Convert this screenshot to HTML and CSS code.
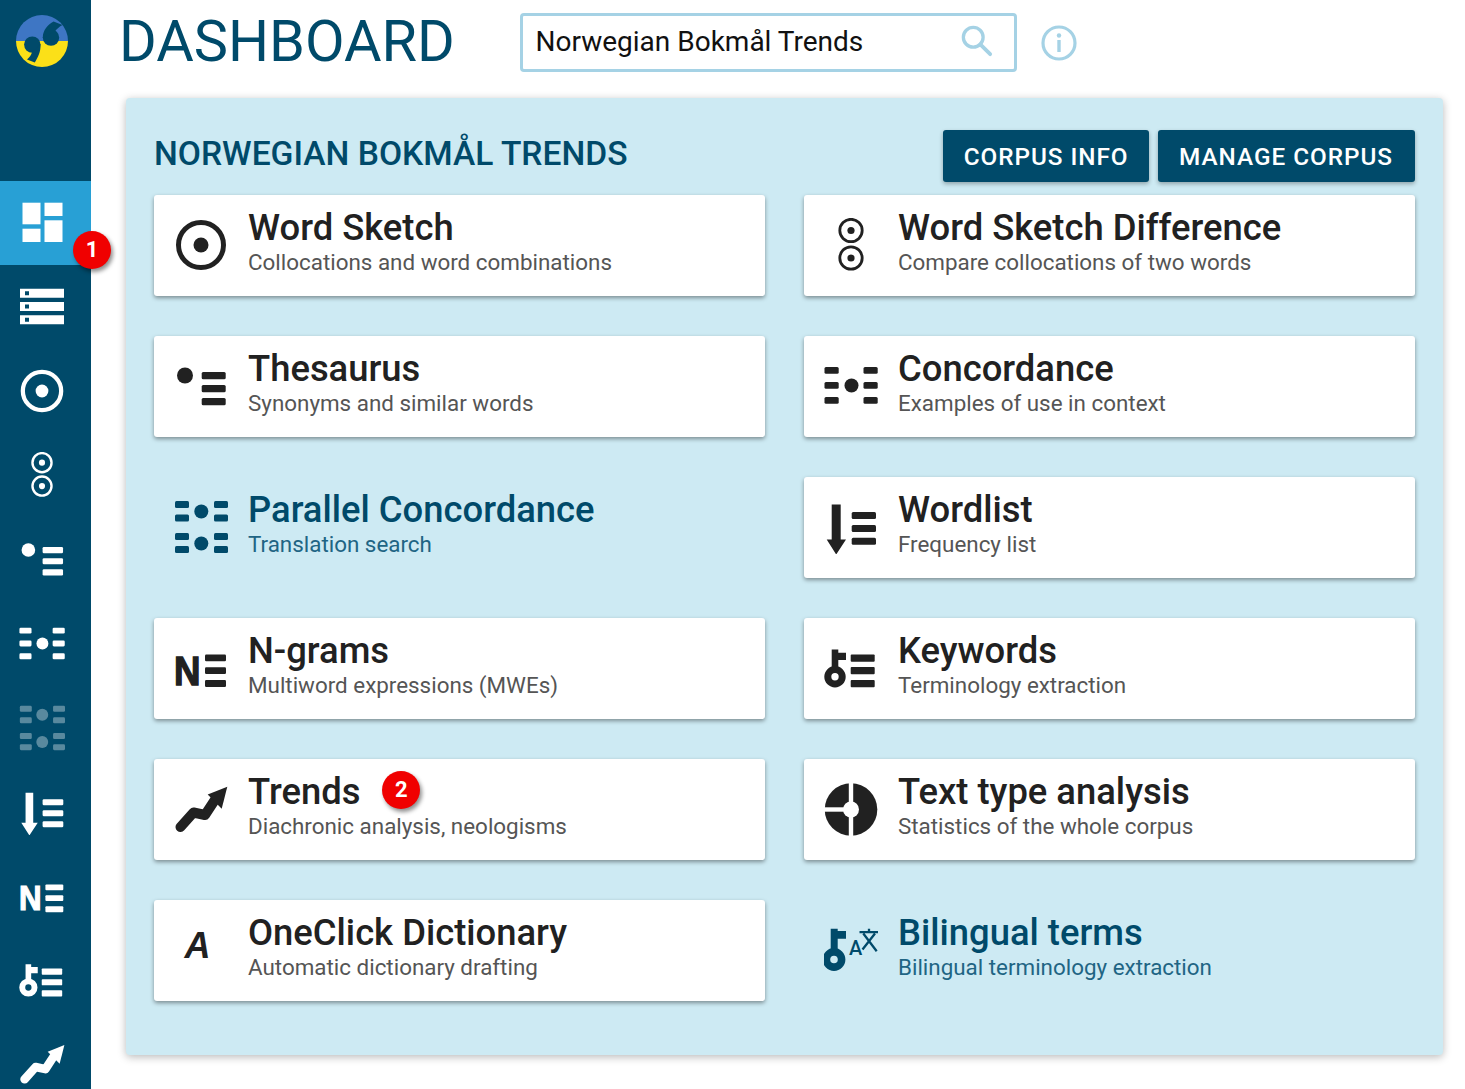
FILE: index.html
```html
<!DOCTYPE html>
<html lang="en">
<head>
<meta charset="utf-8">
<title>Dashboard</title>
<link rel="stylesheet" href="styles.css">
</head>
<body>
<svg class="defs" aria-hidden="true">
  <symbol id="i-ws" viewBox="0 0 54 54"><circle cx="27" cy="27" r="22.5" fill="none" stroke="currentColor" stroke-width="5"/><circle cx="27" cy="27" r="7.5" fill="currentColor"/></symbol>
  <symbol id="i-wsd" viewBox="0 0 54 54"><g fill="none" stroke="currentColor" stroke-width="2.8"><circle cx="27" cy="12.5" r="11.2"/><circle cx="27" cy="40" r="11.2"/></g><g fill="currentColor"><circle cx="27" cy="12.5" r="3.6"/><circle cx="27" cy="40" r="3.6"/></g></symbol>
  <symbol id="i-the" viewBox="0 0 54 54"><g fill="currentColor"><circle cx="11" cy="16.5" r="8"/><rect x="27.7" y="13" width="24" height="7.3" rx="1.5"/><rect x="27.7" y="26" width="24" height="7.3" rx="1.5"/><rect x="27.7" y="39" width="24" height="7.3" rx="1.5"/></g></symbol>
  <symbol id="i-con" viewBox="0 0 54 54"><g fill="currentColor"><circle cx="27.5" cy="26.5" r="7"/><rect x=".5" y="8" width="14.2" height="6.8" rx="1.5"/><rect x=".5" y="23" width="14.2" height="6.8" rx="1.5"/><rect x=".5" y="38" width="14.2" height="6.8" rx="1.5"/><rect x="39.5" y="8" width="14.2" height="6.8" rx="1.5"/><rect x="39.5" y="23" width="14.2" height="6.8" rx="1.5"/><rect x="39.5" y="38" width="14.2" height="6.8" rx="1.5"/></g></symbol>
  <symbol id="i-par" viewBox="0 0 54 54"><g fill="currentColor"><circle cx="27.3" cy="11.5" r="7"/><circle cx="27.3" cy="43.5" r="7"/><rect x="1" y="1" width="14" height="7" rx="1.5"/><rect x="1" y="14.5" width="14" height="7" rx="1.5"/><rect x="1" y="33" width="14" height="7" rx="1.5"/><rect x="1" y="46" width="14" height="7" rx="1.5"/><rect x="40" y="1" width="14" height="7" rx="1.5"/><rect x="40" y="14.5" width="14" height="7" rx="1.5"/><rect x="40" y="33" width="14" height="7" rx="1.5"/><rect x="40" y="46" width="14" height="7" rx="1.5"/></g></symbol>
  <symbol id="i-wl" viewBox="0 0 54 54"><g fill="currentColor"><path d="M7.7 4.5h9v35H22L12.2 54.5 2.7 39.5h5z"/><rect x="27.7" y="12" width="24.3" height="7" rx="1.5"/><rect x="27.7" y="25" width="24.3" height="7" rx="1.5"/><rect x="27.7" y="37.8" width="24.3" height="7" rx="1.5"/></g></symbol>
  <symbol id="i-ng" viewBox="0 0 54 54"><g fill="currentColor"><text class="icon-letter icon-letter--heavy" x="0" y="43.8" font-size="41" textLength="26.5" lengthAdjust="spacingAndGlyphs">N</text><rect x="31" y="13.5" width="21" height="6.8" rx="1.2"/><rect x="31" y="26.2" width="21" height="6.8" rx="1.2"/><rect x="31" y="39" width="21" height="7" rx="1.2"/></g></symbol>
  <symbol id="i-kw" viewBox="0 0 54 54"><circle cx="11" cy="35.8" r="7.2" fill="none" stroke="currentColor" stroke-width="7"/><g fill="currentColor"><path d="M7.7 8.5h6.6v3.3H22V19h-7.7v12H7.7z"/><rect x="26.7" y="13.5" width="24" height="7.3" rx="1"/><rect x="26.7" y="26" width="24" height="7.3" rx="1"/><rect x="26.7" y="39" width="24" height="7.3" rx="1"/></g></symbol>
  <symbol id="i-tr" viewBox="0 0 54 54"><path d="M6.5 45 19.5 30.5 31 33 40.5 18.5" fill="none" stroke="currentColor" stroke-width="10" stroke-linecap="round" stroke-linejoin="round"/><path d="M53.3 4.800 33.7 12.500 47.7 26.800z" fill="currentColor"/></symbol>
  <symbol id="i-tt" viewBox="0 0 54 54"><circle cx="27" cy="27.5" r="26.3" fill="currentColor"/><g fill="#fff"><rect x="24.8" y="0" width="4.4" height="55"/><rect x="0" y="25.3" width="27" height="4.4"/><circle cx="27" cy="27.5" r="8"/></g></symbol>
  <symbol id="i-oc" viewBox="0 0 54 54"><text class="icon-letter icon-letter--italic" x="10.5" y="34.8" font-size="36" fill="currentColor">A</text></symbol>
  <symbol id="i-bt" viewBox="0 0 54 54"><circle cx="10" cy="36.5" r="7.6" fill="none" stroke="currentColor" stroke-width="7.6"/><path d="M6.7 5.800h7v2.200H22v7.800h-8.300V30H6.700z" fill="currentColor"/><text class="icon-small" x="25" y="32" font-size="20" fill="currentColor">A</text><path d="M35.500 9.200h19.800M45 5.800v3.400M51 10.500 38.500 26.500M39.300 10.500 52.700 28.200" fill="none" stroke="currentColor" stroke-width="2.300"/></symbol>
  <symbol id="i-dash" viewBox="0 0 46 46"><g fill="currentColor"><rect x="3.5" y="2.7" width="18" height="21.6"/><rect x="25.5" y="2.7" width="18" height="13.3"/><rect x="3.5" y="28.7" width="18" height="13.3"/><rect x="25.5" y="20.3" width="18" height="21.7"/></g></symbol>
  <symbol id="i-corp" viewBox="0 0 46 46"><path fill="currentColor" fill-rule="evenodd" d="M1 4.700h44v9H1zM6 7.200v4h4v-4zM1 18h44v9H1zM6 20.500v4h4v-4zM1 31.300h44v9H1zM6 33.800v4h4v-4z"/></symbol>
</svg>

<div class="app">
  <nav class="sidebar">
    <div class="logo-wrap">
      <svg class="logo" viewBox="0 0 54 54">
        <path d="M1 27a26 26 0 0 1 52 0z" fill="#3e76c4"/>
        <path d="M1 27a26 26 0 0 0 52 0z" fill="#fbe018"/>
        <g fill="#004a6a">
          <circle cx="17.3" cy="30.6" r="8.2"/>
          <path d="M25.500 30c.5 8-3 14-5.700 18.500L12 45.600c2.500-2.600 4.500-4.600 5-7.600z"/>
          <circle cx="36" cy="23.600" r="8.200"/>
          <path d="M27.800 24c0-8 5-13.500 10.800-16.500L47.500 11c-3 1.700-6 4-7.200 6z"/>
        </g>
      </svg>
    </div>
    <a class="nav-item nav-item--active"><svg class="nav-icon"><use href="#i-dash"/></svg><span class="badge badge--side">1</span></a>
    <a class="nav-item"><svg class="nav-icon"><use href="#i-corp"/></svg></a>
    <a class="nav-item"><svg class="nav-icon"><use href="#i-ws"/></svg></a>
    <a class="nav-item"><svg class="nav-icon"><use href="#i-wsd"/></svg></a>
    <a class="nav-item"><svg class="nav-icon"><use href="#i-the"/></svg></a>
    <a class="nav-item"><svg class="nav-icon"><use href="#i-con"/></svg></a>
    <a class="nav-item nav-item--off"><svg class="nav-icon"><use href="#i-par"/></svg></a>
    <a class="nav-item"><svg class="nav-icon"><use href="#i-wl"/></svg></a>
    <a class="nav-item"><svg class="nav-icon"><use href="#i-ng"/></svg></a>
    <a class="nav-item"><svg class="nav-icon"><use href="#i-kw"/></svg></a>
    <a class="nav-item"><svg class="nav-icon"><use href="#i-tr"/></svg></a>
  </nav>

  <main class="main">
    <header class="topbar">
      <h1 class="page-title">DASHBOARD</h1>
      <div class="search">
        <span class="search-text">Norwegian Bokmål Trends</span>
        <svg class="search-icon" viewBox="0 0 34 34"><circle cx="13" cy="13" r="10.5" fill="none" stroke="currentColor" stroke-width="3.5"/><path d="M20.500 20.500 31 31" stroke="currentColor" stroke-width="4" stroke-linecap="round"/></svg>
      </div>
      <svg class="info-icon" viewBox="0 0 36 36"><circle cx="18" cy="18" r="16" fill="none" stroke="currentColor" stroke-width="3.2"/><circle cx="18" cy="10.5" r="2.2" fill="currentColor"/><rect x="16.3" y="15" width="3.4" height="12" fill="currentColor"/></svg>
    </header>

    <section class="panel">
      <div class="panel-head">
        <h2 class="panel-title">NORWEGIAN BOKMÅL TRENDS</h2>
        <div class="actions">
          <a class="btn">CORPUS INFO</a>
          <a class="btn btn--wide">MANAGE CORPUS</a>
        </div>
      </div>
      <div class="cards">
        <a class="card"><svg class="card-icon"><use href="#i-ws"/></svg><div class="card-text"><div class="card-title">Word Sketch</div><div class="card-sub">Collocations and word combinations</div></div></a>
        <a class="card"><svg class="card-icon"><use href="#i-wsd"/></svg><div class="card-text"><div class="card-title">Word Sketch Difference</div><div class="card-sub">Compare collocations of two words</div></div></a>
        <a class="card"><svg class="card-icon"><use href="#i-the"/></svg><div class="card-text"><div class="card-title">Thesaurus</div><div class="card-sub">Synonyms and similar words</div></div></a>
        <a class="card"><svg class="card-icon"><use href="#i-con"/></svg><div class="card-text"><div class="card-title">Concordance</div><div class="card-sub">Examples of use in context</div></div></a>
        <a class="card card--plain"><svg class="card-icon"><use href="#i-par"/></svg><div class="card-text"><div class="card-title">Parallel Concordance</div><div class="card-sub">Translation search</div></div></a>
        <a class="card"><svg class="card-icon"><use href="#i-wl"/></svg><div class="card-text"><div class="card-title">Wordlist</div><div class="card-sub">Frequency list</div></div></a>
        <a class="card"><svg class="card-icon"><use href="#i-ng"/></svg><div class="card-text"><div class="card-title">N-grams</div><div class="card-sub">Multiword expressions (MWEs)</div></div></a>
        <a class="card"><svg class="card-icon"><use href="#i-kw"/></svg><div class="card-text"><div class="card-title">Keywords</div><div class="card-sub">Terminology extraction</div></div></a>
        <a class="card"><svg class="card-icon"><use href="#i-tr"/></svg><div class="card-text"><div class="card-title">Trends<span class="badge badge--inline">2</span></div><div class="card-sub">Diachronic analysis, neologisms</div></div></a>
        <a class="card"><svg class="card-icon"><use href="#i-tt"/></svg><div class="card-text"><div class="card-title">Text type analysis</div><div class="card-sub">Statistics of the whole corpus</div></div></a>
        <a class="card"><svg class="card-icon"><use href="#i-oc"/></svg><div class="card-text"><div class="card-title">OneClick Dictionary</div><div class="card-sub">Automatic dictionary drafting</div></div></a>
        <a class="card card--plain"><svg class="card-icon"><use href="#i-bt"/></svg><div class="card-text"><div class="card-title">Bilingual terms</div><div class="card-sub">Bilingual terminology extraction</div></div></a>
      </div>
    </section>
  </main>
</div>
</body>
</html>
```

FILE: styles.css
```css
* { box-sizing: border-box; }

html, body {
  margin: 0;
  height: 100%;
  overflow: hidden;
  background: #fff;
  font-family: Roboto, "Liberation Sans", sans-serif;
}

.defs { display: none; }

.app { display: flex; height: 1089px; }

.sidebar {
  flex: 0 0 91px;
  display: flex;
  flex-direction: column;
  background: #004a6a;
  color: #fff;
}

.logo-wrap {
  flex: 0 0 181px;
  display: flex;
  justify-content: center;
  padding: 14px 8px 0 0;
}

.logo { width: 54px; height: 54px; }

.nav-item {
  position: relative;
  flex: 0 0 84.1px;
  display: flex;
  align-items: center;
  justify-content: center;
  padding-right: 8px;
}

.nav-item--active { background: #28a0d5; }
.nav-item--off { opacity: .35; }

.nav-icon { width: 46px; height: 46px; overflow: visible; }

.badge {
  display: inline-flex;
  align-items: center;
  justify-content: center;
  width: 38px;
  height: 38px;
  border-radius: 50%;
  background: #f00000;
  color: #fff;
  font-size: 22px;
  font-weight: 700;
  line-height: 1;
  box-shadow: 2px 3px 4px rgba(0, 0, 0, .45);
}

.badge--side { position: absolute; top: 50px; right: -20px; }
.badge--inline { position: absolute; margin: -1px 0 0 22px; }

.main { flex: 1; min-width: 0; padding: 0 22px 0 35px; }

.topbar {
  display: flex;
  align-items: center;
  height: 98px;
  padding-bottom: 14px;
  color: #a5d2e5;
}

.page-title {
  margin: 0 0 0 -7px;
  width: 401px;
  color: #004a6a;
  font-size: 57.6px;
  font-weight: 400;
  line-height: 1;
}

.search {
  display: flex;
  align-items: center;
  justify-content: space-between;
  width: 497px;
  height: 59px;
  padding: 0 21px 2px 12.5px;
  border: 3px solid #a5d2e5;
  border-radius: 4px;
}

.search-text { color: #111; font-size: 28px; }
.search-icon { width: 32px; height: 32px; margin-top: -1px; }
.info-icon { width: 36px; height: 36px; margin-left: 24px; margin-top: 1px; }

.panel {
  height: 957px;
  padding: 32px 28px 55px 28px;
  background: #cdeaf3;
  border-radius: 4px;
  box-shadow: 0 2px 8px rgba(0, 0, 0, .28);
}

.panel-head {
  display: flex;
  justify-content: space-between;
  height: 65px;
}

.panel-title {
  margin: 0;
  padding-top: 1px;
  color: #004a6a;
  font-size: 33.6px;
  font-weight: 500;
  line-height: 46px;
}

.actions { display: flex; gap: 9px; }

.btn {
  display: flex;
  align-items: center;
  height: 52px;
  padding: 0 20.5px;
  background: #004a6a;
  border-radius: 3px;
  color: #fff;
  font-size: 24.3px;
  font-weight: 500;
  letter-spacing: .97px;
  box-shadow: 0 2px 4px rgba(0, 0, 0, .3);
}

.btn--wide { padding: 0 22px 0 21px; }

.cards {
  display: grid;
  grid-template-columns: 611px 611px;
  grid-auto-rows: 100.7px;
  column-gap: 39px;
  row-gap: 40.3px;
}

.card {
  display: flex;
  align-items: center;
  gap: 20px;
  padding-left: 20px;
  background: #fff;
  border-radius: 3px;
  box-shadow: 0 2px 4px rgba(0, 0, 0, .4);
}

.card--plain { background: none; box-shadow: none; }

.card-icon { flex: 0 0 54px; width: 54px; height: 54px; color: #212121; overflow: visible; }

.card-text { padding-bottom: 6.5px; }

.card-title {
  color: #212121;
  font-size: 36.4px;
  font-weight: 500;
  line-height: 40px;
}

.card-sub {
  color: #555;
  font-size: 22.4px;
  line-height: 29px;
}

.card--plain .card-icon,
.card--plain .card-title { color: #004a6a; }
.card--plain .card-sub { color: #1f6584; }

.icon-letter { font-family: "Liberation Sans", sans-serif; font-weight: 700; }
.icon-letter--heavy { stroke: currentColor; stroke-width: 1.4px; }
.icon-letter--italic { font-style: italic; }
.icon-small { font-family: Roboto, sans-serif; font-weight: 500; }
```
